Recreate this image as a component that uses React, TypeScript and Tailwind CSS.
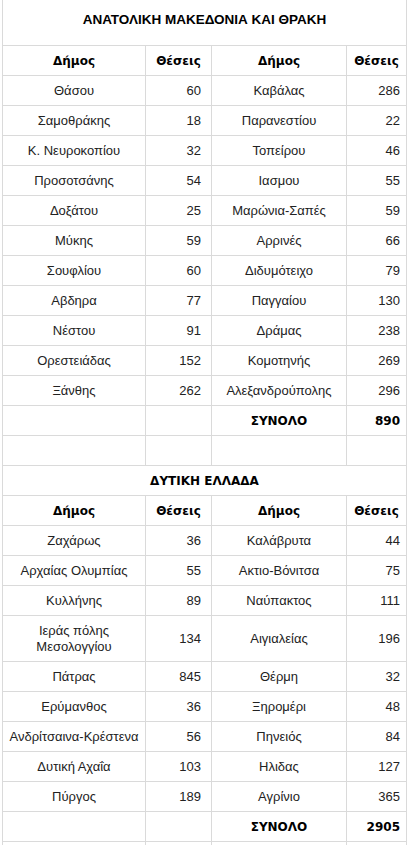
import React from "react";

type Row = [string, string, string, string];

const east: Row[] = [
  ["Θάσου", "60", "Καβάλας", "286"],
  ["Σαμοθράκης", "18", "Παρανεστίου", "22"],
  ["Κ. Νευροκοπίου", "32", "Τοπείρου", "46"],
  ["Προσοτσάνης", "54", "Ιασμου", "55"],
  ["Δοξάτου", "25", "Μαρώνια-Σαπές", "59"],
  ["Μύκης", "59", "Αρρινές", "66"],
  ["Σουφλίου", "60", "Διδυμότειχο", "79"],
  ["Αβδηρα", "77", "Παγγαίου", "130"],
  ["Νέστου", "91", "Δράμας", "238"],
  ["Ορεστειάδας", "152", "Κομοτηνής", "269"],
  ["Ξάνθης", "262", "Αλεξανδρούπολης", "296"],
];

const west: Row[] = [
  ["Ζαχάρως", "36", "Καλάβρυτα", "44"],
  ["Αρχαίας Ολυμπίας", "55", "Ακτιο-Βόνιτσα", "75"],
  ["Κυλλήνης", "89", "Ναύπακτος", "111"],
  ["Ιεράς πόλης Μεσολογγίου", "134", "Αιγιαλείας", "196"],
  ["Πάτρας", "845", "Θέρμη", "32"],
  ["Ερύμανθος", "36", "Ξηρομέρι", "48"],
  ["Ανδρίτσαινα-Κρέστενα", "56", "Πηνειός", "84"],
  ["Δυτική Αχαΐα", "103", "Ηλιδας", "127"],
  ["Πύργος", "189", "Αγρίνιο", "365"],
];

const td = "border border-[#dadada] pt-[7px] pb-[6px] leading-[16px] align-middle";
const body = "font-['Liberation_Sans',Arial,sans-serif] text-[13px] text-[#222]";
const bold = "font-['DejaVu_Sans',Verdana,sans-serif] font-bold text-[12px] text-black";

function Header() {
  return (
    <tr>
      <td className={`${td} ${bold} text-center`}>Δήμος</td>
      <td className={`${td} ${bold} text-center`}>Θέσεις</td>
      <td className={`${td} ${bold} text-center`}>Δήμος</td>
      <td className={`${td} ${bold} text-center`}>Θέσεις</td>
    </tr>
  );
}

function DataRows({ rows }: { rows: Row[] }) {
  return (
    <>
      {rows.map((r, i) => (
        <tr key={i}>
          <td className={`${td} ${body} text-center px-[3px]`}>{r[0]}</td>
          <td className={`${td} ${body} text-right pr-[10px]`}>{r[1]}</td>
          <td className={`${td} ${body} text-center px-[3px]`}>{r[2]}</td>
          <td className={`${td} ${body} text-right pr-[6px]`}>{r[3]}</td>
        </tr>
      ))}
    </>
  );
}

function Total({ value }: { value: string }) {
  return (
    <tr>
      <td className={`${td} ${body}`}>&nbsp;</td>
      <td className={`${td} ${body}`}>&nbsp;</td>
      <td className={`${td} ${bold} text-center`}>ΣΥΝΟΛΟ</td>
      <td className={`${td} ${bold} text-right pr-[6px]`}>{value}</td>
    </tr>
  );
}

function Empty() {
  return (
    <tr>
      <td className={`${td} ${body}`}>&nbsp;</td>
      <td className={`${td} ${body}`}>&nbsp;</td>
      <td className={`${td} ${body}`}>&nbsp;</td>
      <td className={`${td} ${body}`}>&nbsp;</td>
    </tr>
  );
}

export default function App() {
  return (
    <div className="w-[414px] min-h-[845px] bg-white overflow-hidden">
      <table className="table-fixed border-collapse ml-[2px] w-[404px]">
        <colgroup>
          <col className="w-[143px]" />
          <col className="w-[66px]" />
          <col className="w-[135px]" />
          <col className="w-[60px]" />
        </colgroup>
        <tbody>
          <tr>
            <td
              colSpan={4}
              className="border border-t-0 border-[#dadada] h-[45px] pb-[5px] text-center align-middle font-['Liberation_Sans',Arial,sans-serif] font-bold text-[13.5px] text-black"
            >
              ΑΝΑΤΟΛΙΚΗ ΜΑΚΕΔΟΝΙΑ ΚΑΙ ΘΡΑΚΗ
            </td>
          </tr>
          <Header />
          <DataRows rows={east} />
          <Total value="890" />
          <Empty />
          <tr>
            <td colSpan={4} className={`${td} ${bold} text-center`}>
              ΔΥΤΙΚΗ ΕΛΛΑΔΑ
            </td>
          </tr>
          <Header />
          <DataRows rows={west} />
          <Total value="2905" />
          <Empty />
        </tbody>
      </table>
    </div>
  );
}
